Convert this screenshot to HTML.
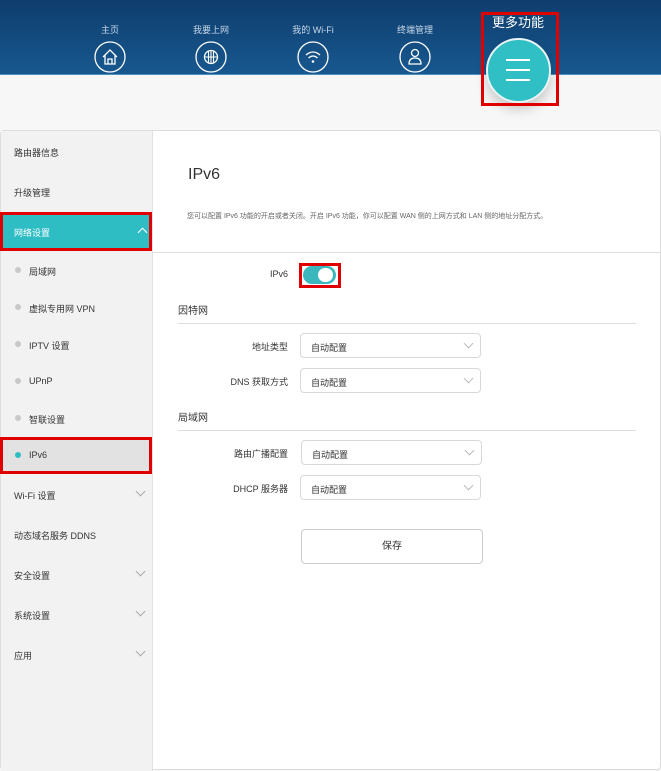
<!DOCTYPE html><html><head><meta charset="utf-8"><style>
*{margin:0;padding:0;box-sizing:border-box}
body{width:661px;height:750px;overflow:hidden;background:#f7f7f7;font-family:"Liberation Sans","Noto Sans CJK SC",sans-serif;position:relative;color:#333}
.hdr{position:absolute;left:0;top:0;width:661px;height:75px;background:linear-gradient(#0f3d6d,#17588f);border-bottom:1px solid #4a90c0}
.nav{position:absolute;top:23px;width:80px;text-align:center;color:#c8d8e8;font-size:9px}
.nav svg{display:block;margin:5px auto 0}
.abs{position:absolute}
.card{position:absolute;left:0;top:130px;width:661px;height:640px;background:#fff;border:1px solid #ddd;border-radius:4px}
.side{position:absolute;left:1px;top:131px;width:152px;height:640px;background:#f2f2f2;border-right:1px solid #e2e2e2}
.si{position:absolute;left:14px;font-size:9px;color:#333}
.dot{position:absolute;left:15px;width:6px;height:6px;border-radius:3px;background:#c8c8c8}
.chev{position:absolute;left:137px;width:7px;height:7px;border-right:1px solid #aaa;border-bottom:1px solid #aaa;transform:rotate(45deg)}
.red{position:absolute;border:3px solid #e00000}
.lbl{position:absolute;font-size:9px;text-align:right;width:110px}
.sel{position:absolute;left:300px;width:181px;height:25px;border:1px solid #d8d8d8;border-radius:4px;font-size:9px;padding:7px 10px}
.sel i{position:absolute;right:8px;top:6px;width:7px;height:7px;border-right:1px solid #bbb;border-bottom:1px solid #bbb;transform:rotate(45deg)}
</style></head><body>
<div class="hdr"></div>
<div class="nav" style="left:70px">主页<svg width="32" height="32" viewBox="0 0 32 32"><circle cx="16" cy="16" r="15" fill="none" stroke="#fff" stroke-width="1.3"/><path d="M9 16 L16 9 L23 16 M11 14 V23 H21 V14 M14 23 V18 H18 V23" fill="none" stroke="#fff" stroke-width="1.3"/></svg></div>
<div class="nav" style="left:171px">我要上网<svg width="32" height="32" viewBox="0 0 32 32"><circle cx="16" cy="16" r="15" fill="none" stroke="#fff" stroke-width="1.3"/><circle cx="16" cy="16" r="6.5" fill="none" stroke="#fff" stroke-width="1.3"/><path d="M9.5 16H22.5M16 9.5V22.5M13.5 10v12M18.5 10v12" stroke="#fff" stroke-width="1.1"/></svg></div>
<div class="nav" style="left:273px">我的 Wi-Fi<svg width="32" height="32" viewBox="0 0 32 32"><circle cx="16" cy="16" r="15" fill="none" stroke="#fff" stroke-width="1.3"/><path d="M9 14 Q16 8 23 14 M11.5 17 Q16 13 20.5 17" fill="none" stroke="#fff" stroke-width="1.3"/><circle cx="16" cy="20.5" r="1.3" fill="#fff"/></svg></div>
<div class="nav" style="left:375px">终端管理<svg width="32" height="32" viewBox="0 0 32 32"><circle cx="16" cy="16" r="15" fill="none" stroke="#fff" stroke-width="1.3"/><circle cx="16" cy="12" r="3.5" fill="none" stroke="#fff" stroke-width="1.3"/><path d="M10 23 Q10 17 16 17 Q22 17 22 23 Z" fill="none" stroke="#fff" stroke-width="1.3"/></svg></div>
<div class="abs" style="left:482px;top:12px;width:72px;text-align:center;color:#fff;font-size:13px">更多功能</div>
<div class="abs" style="left:486px;top:38px;width:65px;height:65px;border-radius:50%;background:#2fbfc4;border:2px solid #e8f4f6;box-shadow:0 6px 12px rgba(0,0,0,.2)"></div>
<div class="abs" style="left:506px;top:59px;width:24px;height:2px;background:#fff;box-shadow:0 10px 0 #fff,0 20px 0 #fff"></div>
<div class="red" style="left:481px;top:12px;width:78px;height:94px"></div>
<div class="card"></div>
<div class="side"></div>
<div class="si" style="top:146px">路由器信息</div>
<div class="si" style="top:186px">升级管理</div>
<div class="abs" style="left:1px;top:213px;width:151px;height:37px;background:#2fbdc4"></div>
<div class="si" style="top:226px;color:#fff">网络设置</div>
<div class="abs" style="left:139px;top:229px;width:7px;height:7px;border-left:1px solid #fff;border-top:1px solid #fff;transform:rotate(45deg)"></div>
<div class="dot" style="top:267px"></div><div class="si" style="left:29px;top:265px">局域网</div>
<div class="dot" style="top:304px"></div><div class="si" style="left:29px;top:302px">虚拟专用网 VPN</div>
<div class="dot" style="top:341px"></div><div class="si" style="left:29px;top:339px">IPTV 设置</div>
<div class="dot" style="top:378px"></div><div class="si" style="left:29px;top:376px">UPnP</div>
<div class="dot" style="top:415px"></div><div class="si" style="left:29px;top:413px">智联设置</div>
<div class="abs" style="left:1px;top:438px;width:151px;height:35px;background:#e2e2e2"></div>
<div class="dot" style="top:452px;background:#2fbdc4"></div><div class="si" style="left:29px;top:450px">IPv6</div>
<div class="si" style="top:489px">Wi-Fi 设置</div><div class="chev" style="top:488px"></div>
<div class="si" style="top:529px">动态域名服务 DDNS</div>
<div class="si" style="top:569px">安全设置</div><div class="chev" style="top:568px"></div>
<div class="si" style="top:609px">系统设置</div><div class="chev" style="top:608px"></div>
<div class="si" style="top:649px">应用</div><div class="chev" style="top:648px"></div>
<div class="red" style="left:0;top:212px;width:152px;height:39px"></div>
<div class="red" style="left:0;top:437px;width:152px;height:37px"></div>
<div class="abs" style="left:188px;top:166px;font-size:16px;color:#333">IPv6</div>
<div class="abs" style="left:187px;top:211px;font-size:7px;color:#666">您可以配置 IPv6 功能的开启或者关闭。开启 IPv6 功能，你可以配置 WAN 侧的上网方式和 LAN 侧的地址分配方式。</div>
<div class="abs" style="left:153px;top:252px;width:507px;height:1px;background:#ddd"></div>
<div class="lbl" style="left:178px;top:269px">IPv6</div>
<div class="abs" style="left:303px;top:266px;width:33px;height:18px;border-radius:9px;background:#3bb8bd"></div>
<div class="abs" style="left:318px;top:268px;width:15px;height:14px;border-radius:7px;background:#fff"></div>
<div class="red" style="left:299px;top:263px;width:42px;height:25px"></div>
<div class="abs" style="left:178px;top:302px;font-size:10px">因特网</div>
<div class="abs" style="left:178px;top:323px;width:458px;height:1px;background:#ddd"></div>
<div class="lbl" style="left:178px;top:340px">地址类型</div><div class="sel" style="top:333px">自动配置<i></i></div>
<div class="lbl" style="left:178px;top:375px">DNS 获取方式</div><div class="sel" style="top:368px">自动配置<i></i></div>
<div class="abs" style="left:178px;top:409px;font-size:10px">局域网</div>
<div class="abs" style="left:178px;top:430px;width:458px;height:1px;background:#ddd"></div>
<div class="lbl" style="left:178px;top:447px">路由广播配置</div><div class="sel" style="top:440px;left:301px">自动配置<i></i></div>
<div class="lbl" style="left:178px;top:482px">DHCP 服务器</div><div class="sel" style="top:475px">自动配置<i></i></div>
<div class="abs" style="left:301px;top:529px;width:182px;height:35px;border:1px solid #ccc;border-radius:4px;font-size:10px;text-align:center;line-height:33px">保存</div>
</body></html>
